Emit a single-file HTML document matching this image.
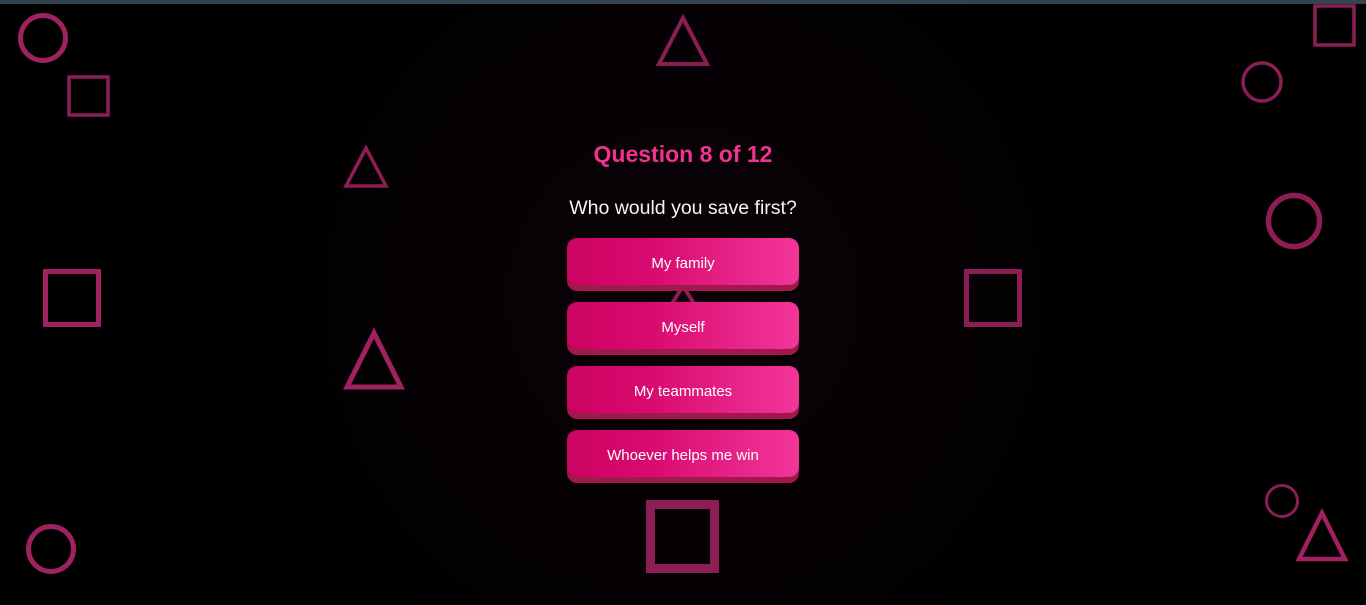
<!DOCTYPE html>
<html><head><style>
html,body{margin:0;padding:0;width:1366px;height:605px;overflow:hidden;background:#000;font-family:"Liberation Sans",sans-serif;position:relative}
.wrap{position:absolute;left:0;top:0;width:1366px;height:605px;overflow:hidden}
.glow{position:absolute;left:233px;top:-150px;width:900px;height:900px;border-radius:50%;background:radial-gradient(circle,#0b0207 0%,#050104 45%,#000 70%)}
.bar{position:absolute;top:0;left:0;width:1366px;height:4px;background:#33434f;z-index:5}
svg.bg{position:absolute;left:0;top:0}
h1{position:absolute;top:141px;left:0;width:1366px;text-align:center;margin:0;font-size:23px;font-weight:bold;color:#f0338f}
.q{position:absolute;top:197px;left:0;width:1366px;text-align:center;color:#f4f4f4;font-size:19.5px}
.btn{position:absolute;left:567px;width:232px;height:47px;border-radius:10px;background:linear-gradient(90deg,#cc0462 0%,#d80a70 35%,#f3359a 100%);box-shadow:0 6px 0 #a1184b;color:#fff;font-size:15px;text-align:center;line-height:51px}
</style></head><body>
<div class="wrap"><div class="glow"></div></div>
<div class="bar"></div>
<svg class="bg" width="1366" height="605" fill="none">
<g stroke="#a0215f">
<circle cx="43" cy="38" r="22.5" stroke-width="5"/>
<circle cx="51" cy="549" r="22.5" stroke-width="5"/>
<rect x="45.5" y="271.5" width="53" height="53" stroke-width="5"/>
<polygon points="374,333 347,387 401,387" stroke-width="5"/>
<polygon points="1322,513 1299,559 1345,559" stroke-width="4.5"/>
</g>
<g stroke="#8c1d55">
<rect x="69" y="77" width="39" height="38" stroke-width="3.5"/>
<polygon points="683,18 659,64 707,64" stroke-width="4"/>
<polygon points="366,148 346,186 386,186" stroke-width="3.5"/>
<polygon points="683,286 668,310 698,310" stroke-width="4"/>
<rect x="966.5" y="271.5" width="53" height="53" stroke-width="5"/>
<rect x="650.5" y="504.5" width="64" height="64" stroke-width="9"/>
<circle cx="1294" cy="221" r="25.5" stroke-width="5.5"/>
<circle cx="1262" cy="82" r="19" stroke-width="3.5"/>
<rect x="1315" y="6" width="39" height="39" stroke-width="3.5"/>
<circle cx="1282" cy="501" r="15.5" stroke-width="3"/>
</g>
</svg>
<h1>Question 8 of 12</h1>
<div class="q">Who would you save first?</div>
<div class="btn" style="top:238px">My family</div>
<div class="btn" style="top:302px">Myself</div>
<div class="btn" style="top:366px">My teammates</div>
<div class="btn" style="top:430px">Whoever helps me win</div>
</body></html>
